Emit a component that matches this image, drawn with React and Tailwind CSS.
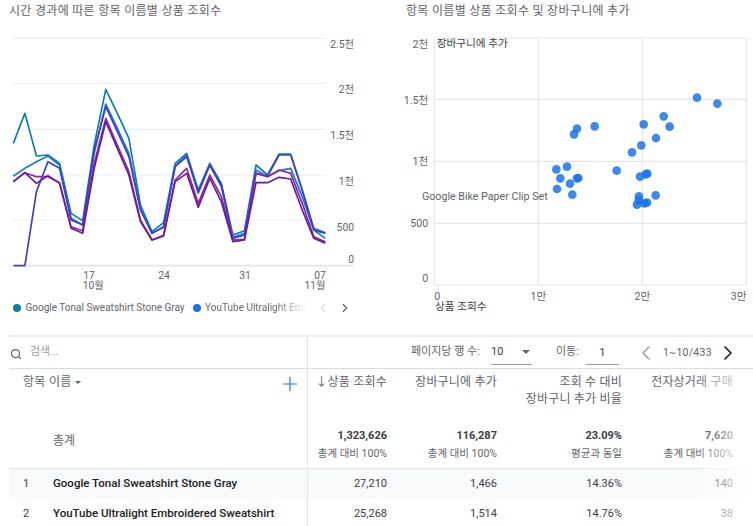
import React from "react";
import { ChevronLeft, ChevronRight, Search, Plus } from "lucide-react";

const xs = Array.from({ length: 28 }, (_, i) => 40 + i * (936 / 27));
const series = [
  { c: "#0b7fa8", y: [430,340,468,465,490,640,662,435,268,340,415,615,695,668,490,460,570,490,550,705,692,495,525,462,462,570,685,698] },
  { c: "#1a73e8", y: [528,505,485,468,495,655,675,460,312,385,460,625,700,680,498,465,580,495,560,712,700,510,530,512,505,590,690,715] },
  { c: "#3f3fc0", y: [797,797,575,485,505,660,675,450,320,395,470,630,700,682,500,470,575,495,555,715,705,520,528,465,465,570,690,700] },
  { c: "#8e24aa", y: [545,518,530,530,548,680,692,490,355,435,515,660,720,706,540,505,610,525,590,720,718,520,530,510,520,610,710,725] },
  { c: "#6a1b9a", y: [545,518,550,527,550,685,700,505,365,445,525,665,720,708,545,520,622,535,605,725,720,548,548,532,537,630,715,730] },
];
const dots = [[963,293],[1024,311],[863,349],[881,380],[803,373],[840,414],[796,436],[768,457],[656,379],[603,386],[594,403],[573,500],[541,508],[553,535],[582,551],[543,567],[589,584],[603,535],[607,534],[722,512],[792,530],[809,523],[814,521],[839,586],[789,589],[788,600],[805,610],[813,608],[783,614]];

function LineChart() {
  const grid = [115, 250, 388, 525, 660];
  const yl = [["2.5천",145],["2천",280],["1.5천",417],["1천",555],["500",692],["0",788]];
  return (
    <svg viewBox="0 90 1128 810" className="block w-[376px] h-[270px]">
      {grid.map((y) => <line key={y} x1="40" x2="978" y1={y} y2={y} stroke="#eceef0" strokeWidth="3.5" />)}
      <line x1="40" x2="1060" y1="797" y2="797" stroke="#e3e5e8" strokeWidth="5" />
      {[247,490,733,976].map((x) => <line key={x} x1={x} x2={x} y1="797" y2="815" stroke="#e3e5e8" strokeWidth="3" />)}
      {series.map((s) => (
        <polyline key={s.c} fill="none" stroke="#fff" strokeWidth="8" strokeOpacity="0.5" strokeLinejoin="round" points={s.y.map((y, i) => `${xs[i]},${y}`).join(" ")} />
      ))}
      {series.map((s) => (
        <polyline key={s.c} fill="none" stroke={s.c} strokeWidth="5" strokeLinejoin="round" points={s.y.map((y, i) => `${xs[i]},${y}`).join(" ")} />
      ))}
      <g fill="#5f6368" fontSize="31" textAnchor="end">
        {yl.map(([t, y]) => <text key={t} x="1062" y={y}>{t}</text>)}
      </g>
      <g fill="#5f6368" fontSize="31" textAnchor="middle">
        <text x="267" y="836">17</text>
        <text x="492" y="836">24</text>
        <text x="735" y="836">31</text>
        <text x="960" y="836">07</text>
        <text x="280" y="867">10월</text>
        <text x="945" y="867">11월</text>
      </g>
    </svg>
  );
}

function ScatterChart() {
  return (
    <svg viewBox="0 90 1131 870" className="block w-[377px] h-[290px]">
      <g stroke="#e3e5e8" strokeWidth="3.5">
        <line x1="175" x2="175" y1="114" y2="856" />
        <line x1="1111" x2="1111" y1="114" y2="856" />
        <line x1="487" x2="487" y1="114" y2="856" />
        <line x1="799" x2="799" y1="114" y2="856" />
        <line x1="175" x2="1111" y1="114" y2="114" />
        <line x1="175" x2="1111" y1="298" y2="298" />
        <line x1="175" x2="1111" y1="484" y2="484" />
        <line x1="175" x2="1111" y1="670" y2="670" />
        <line x1="175" x2="1111" y1="855" y2="855" />
      </g>
      <g fill="#1a73e8" fillOpacity="0.85">
        {dots.map(([x, y], i) => <circle key={i} cx={x} cy={y} r="13" />)}
      </g>
      <g fill="#5f6368" fontSize="32" textAnchor="end">
        <text x="157" y="145">2천</text>
        <text x="157" y="311">1.5천</text>
        <text x="157" y="494">1천</text>
        <text x="157" y="680">500</text>
        <text x="157" y="845">0</text>
      </g>
      <g fill="#5f6368" fontSize="32" textAnchor="middle">
        <text x="184" y="900">0</text>
        <text x="487" y="900">1만</text>
        <text x="799" y="900">2만</text>
        <text x="1088" y="900">3만</text>
      </g>
      <text x="182" y="142" fontSize="32" fill="#3c4043">장바구니에 추가</text>
      <text x="177" y="931" fontSize="32" fill="#3c4043">상품 조회수</text>
      <text x="138" y="600" fontSize="32" fill="#5f6368">Google Bike Paper Clip Set</text>
    </svg>
  );
}

const rowCols = "grid grid-cols-[299px_85px_110px_125px_125px]";

function Cell({ children, className = "" }) {
  return <div className={`text-right pr-[6px] ${className}`}>{children}</div>;
}

export default function App() {
  return (
    <div className="relative w-[753px] h-[526px] overflow-hidden bg-white font-['Roboto','Noto_Sans_CJK_KR',sans-serif] text-[#5f6368]">
      <div className="flex h-[335px]">
        <div className="w-[376px]">
          <div className="h-[30px] pl-[9px] pt-[3px] text-[12px] leading-[16px] tracking-[0.3px]">시간 경과에 따른 항목 이름별 상품 조회수</div>
          <LineChart />
          <div className="flex items-center h-[16px] pl-[13px] text-[10px] leading-[16px] whitespace-nowrap">
            <span className="w-[8px] h-[8px] rounded-full bg-[#0b7fa8] mr-[4.5px]" />
            <span>Google Tonal Sweatshirt Stone Gray</span>
            <span className="w-[8px] h-[8px] rounded-full bg-[#1a73e8] ml-[8px] mr-[4.5px]" />
            <span className="w-[102px] overflow-hidden bg-clip-text text-transparent bg-gradient-to-r from-[#5f6368] from-70% to-[#ffffff]">YouTube Ultralight Embroidered</span>
            <ChevronLeft className="ml-[9px] w-[14px] h-[14px] text-[#dadce0]" />
            <ChevronRight className="ml-[8px] w-[14px] h-[14px] text-[#5f6368]" />
          </div>
        </div>
        <div className="w-[377px]">
          <div className="h-[30px] pl-[30px] pt-[3px] text-[12px] leading-[16px] tracking-[0.3px]">항목 이름별 상품 조회수 및 장바구니에 추가</div>
          <ScatterChart />
        </div>
      </div>

      <div className="relative ml-[9px] border-t-2 border-[#eceef0] text-[11px]">
        <div className="flex h-[32px] border-b border-[#dadce0]">
          <div className="flex items-center w-[299px] border-r border-[#e3e5e8] pl-[1px]">
            <Search className="w-[12px] h-[12px] mt-[3px] text-[#5f6368]" strokeWidth={2.5} />
            <span className="ml-[8px] text-[#9aa0a6]">검색...</span>
          </div>
          <div className="flex items-center pl-[103px] whitespace-nowrap">
            <span className="w-[80px]">페이지당 행 수:</span>
            <div className="flex items-center justify-between w-[41px] h-[24px] border-b border-[#9aa0a6] text-[#3c4043]">
              <span>10</span>
              <span className="mr-[2px] border-x-[4px] border-t-[4px] border-x-transparent border-t-[#5f6368]" />
            </div>
            <span className="ml-[24px]">이동:</span>
            <div className="ml-[7px] w-[33px] h-[24px] leading-[24px] border-b border-[#9aa0a6] text-center text-[#3c4043]">1</div>
            <ChevronLeft className="ml-[15px] w-[24px] h-[24px] text-[#9aa0a6]" strokeWidth={1.5} />
            <span className="ml-[5px] text-[10.5px] tracking-[0.25px]">1~10/433</span>
            <ChevronRight className="ml-[4px] w-[24px] h-[24px] text-[#202124]" strokeWidth={1.75} />
          </div>
        </div>

        <div className={`${rowCols} h-[50px] text-[12px] leading-[17px]`}>
          <div className="flex justify-between border-r border-[#e3e5e8] pl-[14px] pr-[6px] pt-[5px]">
            <span className="flex items-start gap-[3px] tracking-[0.3px]">항목 이름<span className="mt-[7px] border-x-[3px] border-t-[3px] border-x-transparent border-t-[#5f6368]" /></span>
            <Plus className="w-[22px] h-[22px] -mt-[1px] text-[#1a73e8]" strokeWidth={1.25} />
          </div>
          <Cell className="pt-[5px] whitespace-nowrap tracking-[0.2px]">↓상품 조회수</Cell>
          <Cell className="pt-[5px] tracking-[0.2px]">장바구니에 추가</Cell>
          <Cell className="pt-[5px] tracking-[0.2px]">조회 수 대비<br />장바구니 추가 비율</Cell>
          <Cell className="pt-[5px] pr-[20px] tracking-[0.2px]">전자상거래 구매</Cell>
        </div>

        <div className={`${rowCols} h-[50px] border-b border-[#e3e5e8]`}>
          <div className="flex items-center pl-[44px] border-r border-[#e3e5e8] text-[12px] pb-[6px]">총계</div>
          {[["1,323,626","총계 대비 100%"],["116,287","총계 대비 100%"],["23.09%","평균과 동일"],["7,620","총계 대비 100%"]].map(([a,b],i)=>(
            <Cell key={a} className={`pt-[8px] leading-[18px] ${i===3?"pr-[20px]":""}`}>
              <div className="font-bold text-[#3c4043]">{a}</div>
              <div className="text-[10.5px]">{b}</div>
            </Cell>
          ))}
        </div>

        <div className={`${rowCols} h-[30px] items-center bg-[#f8f9fa] text-[#3c4043]`}>
          <div className="flex items-center h-full border-r border-[#e3e5e8] pl-[14px]">
            <span className="w-[30px]">1</span><span className="font-medium text-[11.5px] text-[#202124]">Google Tonal Sweatshirt Stone Gray</span>
          </div>
          <Cell>27,210</Cell><Cell>1,466</Cell><Cell>14.36%</Cell><Cell className="pr-[20px]">140</Cell>
        </div>
        <div className={`${rowCols} h-[30px] items-center text-[#3c4043]`}>
          <div className="flex items-center h-full border-r border-[#e3e5e8] pl-[14px]">
            <span className="w-[30px]">2</span><span className="font-medium text-[11.5px] text-[#202124]">YouTube Ultralight Embroidered Sweatshirt</span>
          </div>
          <Cell>25,268</Cell><Cell>1,514</Cell><Cell>14.76%</Cell><Cell className="pr-[20px]">38</Cell>
        </div>

        <div className="absolute right-0 top-[34px] bottom-0 w-[60px] bg-gradient-to-r from-transparent to-white" />
      </div>
    </div>
  );
}
